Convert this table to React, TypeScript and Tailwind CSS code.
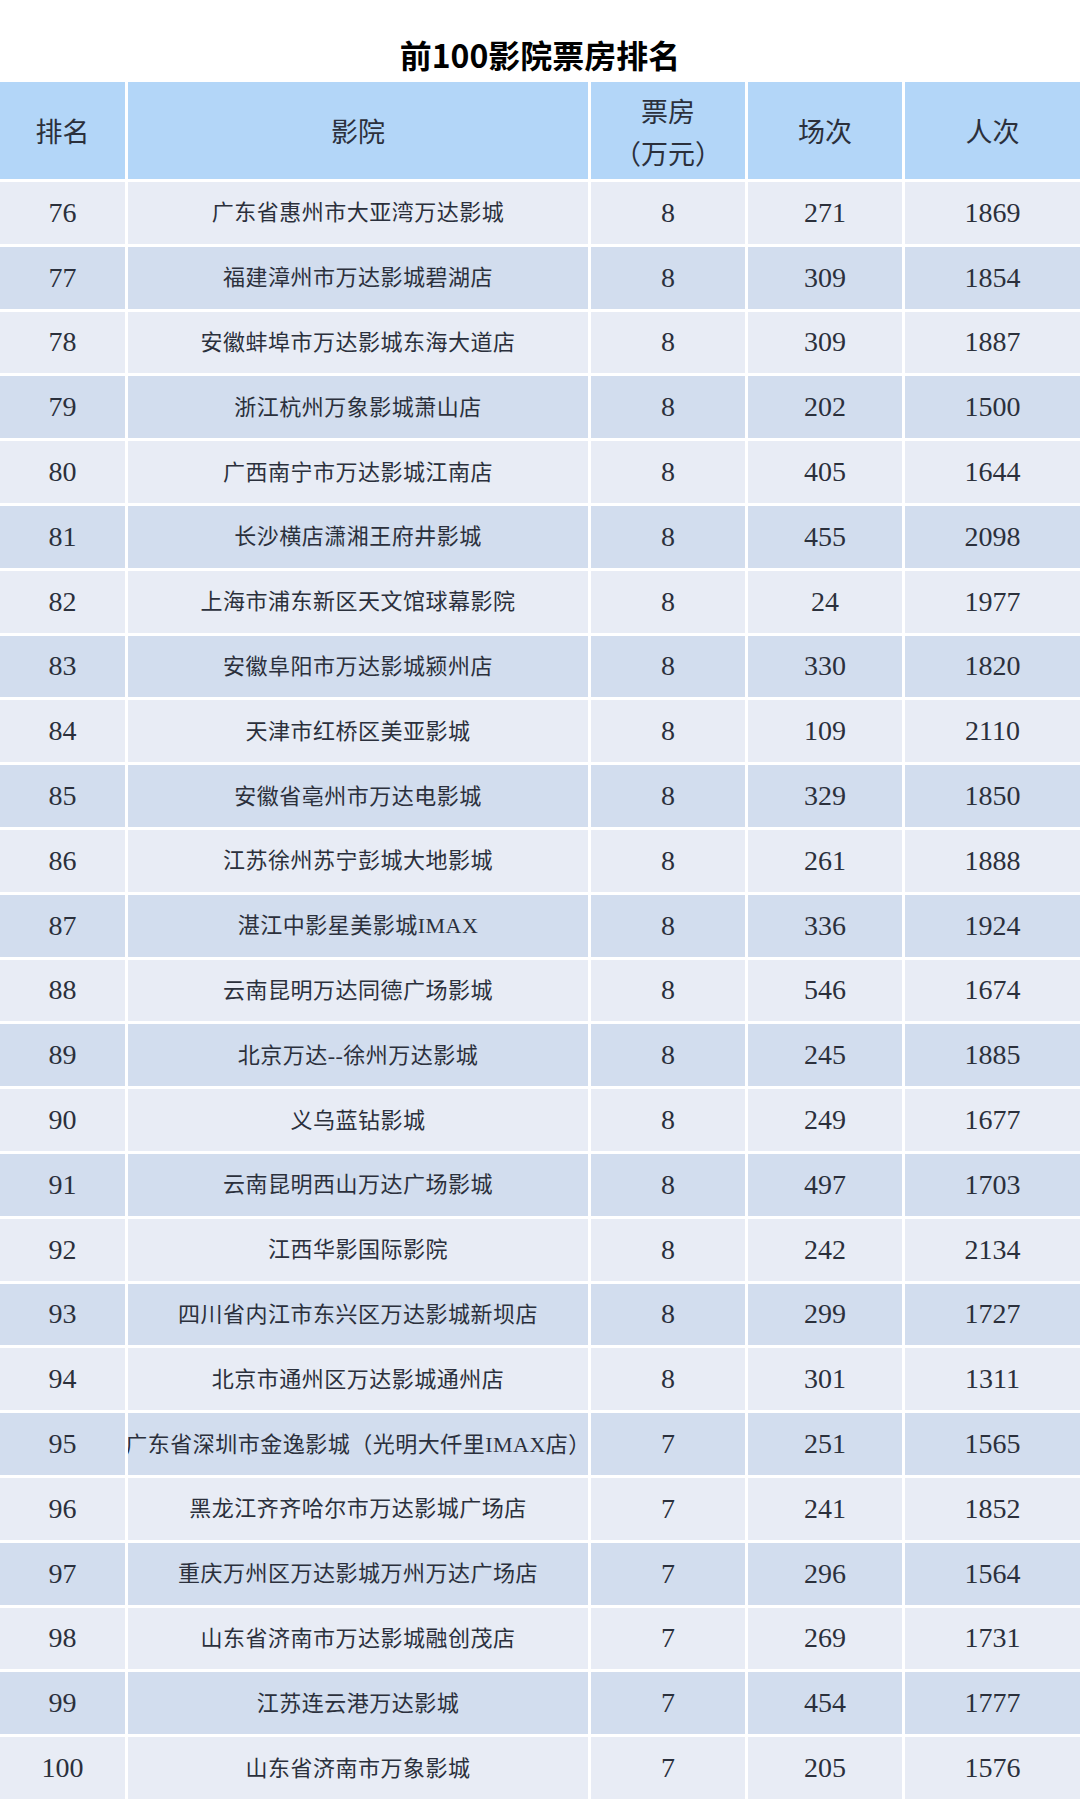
type Row = [number, string, number, number, number];

const rows: Row[] = [
  [76, '广东省惠州市大亚湾万达影城', 8, 271, 1869],
  [77, '福建漳州市万达影城碧湖店', 8, 309, 1854],
  [78, '安徽蚌埠市万达影城东海大道店', 8, 309, 1887],
  [79, '浙江杭州万象影城萧山店', 8, 202, 1500],
  [80, '广西南宁市万达影城江南店', 8, 405, 1644],
  [81, '长沙横店潇湘王府井影城', 8, 455, 2098],
  [82, '上海市浦东新区天文馆球幕影院', 8, 24, 1977],
  [83, '安徽阜阳市万达影城颍州店', 8, 330, 1820],
  [84, '天津市红桥区美亚影城', 8, 109, 2110],
  [85, '安徽省亳州市万达电影城', 8, 329, 1850],
  [86, '江苏徐州苏宁彭城大地影城', 8, 261, 1888],
  [87, '湛江中影星美影城IMAX', 8, 336, 1924],
  [88, '云南昆明万达同德广场影城', 8, 546, 1674],
  [89, '北京万达--徐州万达影城', 8, 245, 1885],
  [90, '义乌蓝钻影城', 8, 249, 1677],
  [91, '云南昆明西山万达广场影城', 8, 497, 1703],
  [92, '江西华影国际影院', 8, 242, 2134],
  [93, '四川省内江市东兴区万达影城新坝店', 8, 299, 1727],
  [94, '北京市通州区万达影城通州店', 8, 301, 1311],
  [95, '广东省深圳市金逸影城（光明大仟里IMAX店）', 7, 251, 1565],
  [96, '黑龙江齐齐哈尔市万达影城广场店', 7, 241, 1852],
  [97, '重庆万州区万达影城万州万达广场店', 7, 296, 1564],
  [98, '山东省济南市万达影城融创茂店', 7, 269, 1731],
  [99, '江苏连云港万达影城', 7, 454, 1777],
  [100, '山东省济南市万象影城', 7, 205, 1576],
];

// column widths measured off the screenshot
const cols = 'grid grid-cols-[125px_460px_154px_154px_1fr] gap-x-[3px]';
const cell = 'flex items-center justify-center overflow-hidden whitespace-nowrap';
const head = `${cell} bg-[#b3d6f8] pt-[6px]`;

export default function App() {
  return (
    <div className="w-[1080px] bg-white text-[#2b303c] font-['Liberation_Serif','Noto_Sans_CJK_SC',serif]">
      {/* Title */}
      <div className="h-[82px] flex items-end justify-center pb-[8px]">
        <h1 className="text-[32px] leading-[40px] font-bold text-black font-['Noto_Sans_CJK_SC',sans-serif]">
          前100影院票房排名
        </h1>
      </div>

      <div className="flex flex-col gap-y-[3px]">
        {/* Header */}
        <div className={`${cols} h-[97px] text-[27px]`}>
          <div className={head}>排名</div>
          <div className={head}>影院</div>
          <div className={`${head} flex-col leading-[42px]`}>
            <span>票房</span>
            <span className="[font-feature-settings:'halt']">（万元）</span>
          </div>
          <div className={head}>场次</div>
          <div className={head}>人次</div>
        </div>

        {rows.map(([rank, name, box, shows, people], i) => {
          const bg = i % 2 === 0 ? 'bg-[#e8ecf5]' : 'bg-[#d2ddee]';
          return (
            <div key={rank} className={`${cols} h-[61.8px]`}>
              <div className={`${cell} ${bg} text-[28px]`}>{rank}</div>
              <div className={`${cell} ${bg} text-[22px] tracking-[0.5px]`}>{name}</div>
              <div className={`${cell} ${bg} text-[28px]`}>{box}</div>
              <div className={`${cell} ${bg} text-[28px]`}>{shows}</div>
              <div className={`${cell} ${bg} text-[28px]`}>{people}</div>
            </div>
          );
        })}
      </div>
    </div>
  );
}
